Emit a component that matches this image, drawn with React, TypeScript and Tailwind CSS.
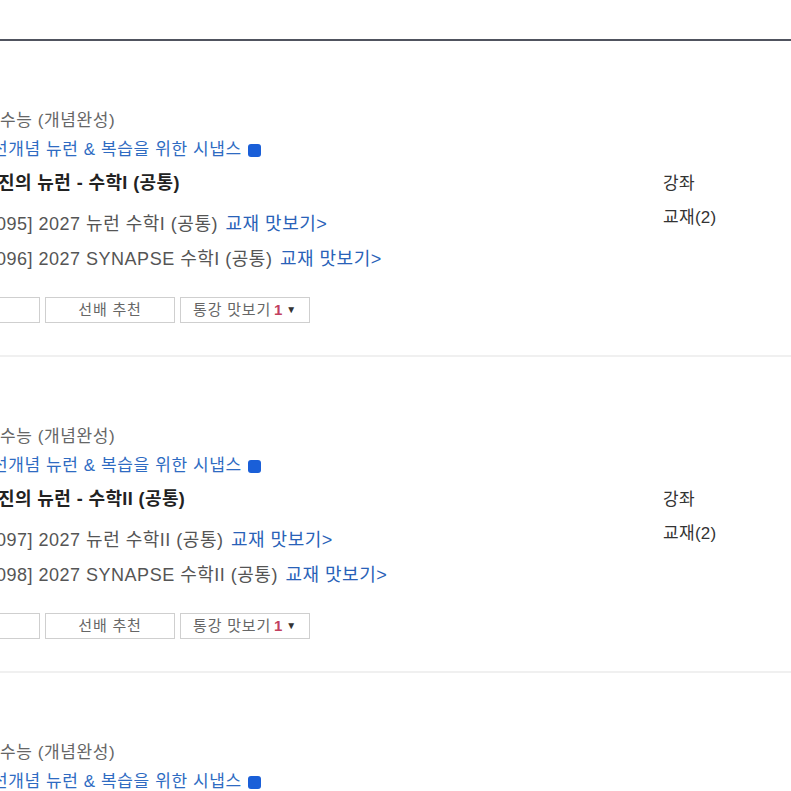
const courses = [
  {
    id: 1,
    title: "진의 뉴런 - 수학I (공통)",
    books: [
      { code: "095]", name: "2027 뉴런 수학I (공통)" },
      { code: "096]", name: "2027 SYNAPSE 수학I (공통)" },
    ],
  },
  {
    id: 2,
    title: "진의 뉴런 - 수학II (공통)",
    books: [
      { code: "097]", name: "2027 뉴런 수학II (공통)" },
      { code: "098]", name: "2027 SYNAPSE 수학II (공통)" },
    ],
  },
  {
    id: 3,
    title: "진의 뉴런 - 미적분",
    books: [
      { code: "099]", name: "2027 뉴런 미적분" },
      { code: "100]", name: "2027 SYNAPSE 미적분" },
    ],
  },
];

type Course = (typeof courses)[number];

const CourseItem = ({ course }: { course: Course }) => {
  return (
    <li className="flex border-b-2 border-[#f0f0f0] pt-[70px] pb-[32px]">
      <div className="flex-1 text-[17px] leading-[20px] tracking-[0.6px]">
        <p className="text-[#666]">수능 (개념완성)</p>

        <p className="mt-[9px] -ml-[8px] flex items-center text-[#2e6bc2]">
          선개념 뉴런 &amp; 복습을 위한 시냅스
          <span className="ml-[6px] inline-block h-[13px] w-[13px] rounded-[3px] bg-[#1a5fd8]" />
        </p>

        <h3 className="mt-[13px] -ml-[2px] text-[18px] font-bold tracking-[0.4px] text-[#222]">
          {course.title}
        </h3>

        <div className="mt-[21px] space-y-[15px] text-[18px] tracking-[0.5px]">
          {course.books.map((book) => (
            <p key={book.code} className="-ml-[4px] text-[#555]">
              {book.code} {book.name}{" "}
              <a className="ml-[2px] text-[#2962b8]">교재 맛보기&gt;</a>
            </p>
          ))}
        </div>

        <div className="mt-[28px] flex gap-[5px] -ml-[20px] tracking-[0.8px]">
          <button className="h-[26px] w-[60px] border border-[#cfcfcf] bg-white" />
          <button className="h-[26px] w-[130px] border border-[#cfcfcf] bg-white text-[15px] text-[#666]">
            선배 추천
          </button>
          <button className="flex h-[26px] w-[130px] items-center justify-center gap-[3px] border border-[#cfcfcf] bg-white text-[15px] text-[#666]">
            통강 맛보기 <span className="font-bold text-[#c2405f]">1</span>
            <span className="text-[10px] text-[#333]">▼</span>
          </button>
        </div>
      </div>

      <div className="mt-[63px] w-[128px] text-[17px] leading-[20px] tracking-[0.3px] text-[#333]">
        <p>강좌</p>
        <p className="mt-[14px]">교재(2)</p>
      </div>
    </li>
  );
};

export default function App() {
  return (
    <div
      className="h-[791px] overflow-hidden bg-white"
      style={{ fontFamily: '"Liberation Sans", "Noto Sans CJK KR", sans-serif' }}
    >
      <div className="h-[41px] border-b-2 border-[#50535f]" />
      <ul>
        {courses.map((course) => (
          <CourseItem key={course.id} course={course} />
        ))}
      </ul>
    </div>
  );
}
